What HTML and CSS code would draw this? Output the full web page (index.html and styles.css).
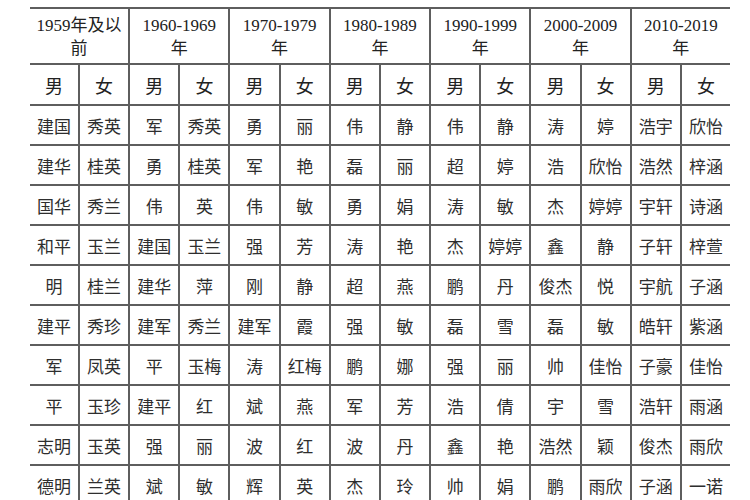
FILE: index.html
```html
<!DOCTYPE html>
<html lang="zh">
<head>
<meta charset="utf-8">
<title>各年代常见名字</title>
<link rel="stylesheet" href="styles.css">
</head>
<body>
<div class="sheet">
  <div class="cell head first">1959年及以<br>前</div>
  <div class="cell head">1960-1969<br>年</div>
  <div class="cell head">1970-1979<br>年</div>
  <div class="cell head">1980-1989<br>年</div>
  <div class="cell head">1990-1999<br>年</div>
  <div class="cell head">2000-2009<br>年</div>
  <div class="cell head">2010-2019<br>年</div>

  <div class="cell sex first">男</div><div class="cell sex">女</div>
  <div class="cell sex">男</div><div class="cell sex">女</div>
  <div class="cell sex">男</div><div class="cell sex">女</div>
  <div class="cell sex">男</div><div class="cell sex">女</div>
  <div class="cell sex">男</div><div class="cell sex">女</div>
  <div class="cell sex">男</div><div class="cell sex">女</div>
  <div class="cell sex">男</div><div class="cell sex">女</div>

  <div class="cell first">建国</div><div class="cell">秀英</div><div class="cell">军</div><div class="cell">秀英</div><div class="cell">勇</div><div class="cell">丽</div><div class="cell">伟</div><div class="cell">静</div><div class="cell">伟</div><div class="cell">静</div><div class="cell">涛</div><div class="cell">婷</div><div class="cell">浩宇</div><div class="cell">欣怡</div>

  <div class="cell first">建华</div><div class="cell">桂英</div><div class="cell">勇</div><div class="cell">桂英</div><div class="cell">军</div><div class="cell">艳</div><div class="cell">磊</div><div class="cell">丽</div><div class="cell">超</div><div class="cell">婷</div><div class="cell">浩</div><div class="cell">欣怡</div><div class="cell">浩然</div><div class="cell">梓涵</div>

  <div class="cell first">国华</div><div class="cell">秀兰</div><div class="cell">伟</div><div class="cell">英</div><div class="cell">伟</div><div class="cell">敏</div><div class="cell">勇</div><div class="cell">娟</div><div class="cell">涛</div><div class="cell">敏</div><div class="cell">杰</div><div class="cell">婷婷</div><div class="cell">宇轩</div><div class="cell">诗涵</div>

  <div class="cell first">和平</div><div class="cell">玉兰</div><div class="cell">建国</div><div class="cell">玉兰</div><div class="cell">强</div><div class="cell">芳</div><div class="cell">涛</div><div class="cell">艳</div><div class="cell">杰</div><div class="cell">婷婷</div><div class="cell">鑫</div><div class="cell">静</div><div class="cell">子轩</div><div class="cell">梓萱</div>

  <div class="cell first">明</div><div class="cell">桂兰</div><div class="cell">建华</div><div class="cell">萍</div><div class="cell">刚</div><div class="cell">静</div><div class="cell">超</div><div class="cell">燕</div><div class="cell">鹏</div><div class="cell">丹</div><div class="cell">俊杰</div><div class="cell">悦</div><div class="cell">宇航</div><div class="cell">子涵</div>

  <div class="cell first">建平</div><div class="cell">秀珍</div><div class="cell">建军</div><div class="cell">秀兰</div><div class="cell">建军</div><div class="cell">霞</div><div class="cell">强</div><div class="cell">敏</div><div class="cell">磊</div><div class="cell">雪</div><div class="cell">磊</div><div class="cell">敏</div><div class="cell">皓轩</div><div class="cell">紫涵</div>

  <div class="cell first">军</div><div class="cell">凤英</div><div class="cell">平</div><div class="cell">玉梅</div><div class="cell">涛</div><div class="cell">红梅</div><div class="cell">鹏</div><div class="cell">娜</div><div class="cell">强</div><div class="cell">丽</div><div class="cell">帅</div><div class="cell">佳怡</div><div class="cell">子豪</div><div class="cell">佳怡</div>

  <div class="cell first">平</div><div class="cell">玉珍</div><div class="cell">建平</div><div class="cell">红</div><div class="cell">斌</div><div class="cell">燕</div><div class="cell">军</div><div class="cell">芳</div><div class="cell">浩</div><div class="cell">倩</div><div class="cell">宇</div><div class="cell">雪</div><div class="cell">浩轩</div><div class="cell">雨涵</div>

  <div class="cell first">志明</div><div class="cell">玉英</div><div class="cell">强</div><div class="cell">丽</div><div class="cell">波</div><div class="cell">红</div><div class="cell">波</div><div class="cell">丹</div><div class="cell">鑫</div><div class="cell">艳</div><div class="cell">浩然</div><div class="cell">颖</div><div class="cell">俊杰</div><div class="cell">雨欣</div>

  <div class="cell first">德明</div><div class="cell">兰英</div><div class="cell">斌</div><div class="cell">敏</div><div class="cell">辉</div><div class="cell">英</div><div class="cell">杰</div><div class="cell">玲</div><div class="cell">帅</div><div class="cell">娟</div><div class="cell">鹏</div><div class="cell">雨欣</div><div class="cell">子涵</div><div class="cell">一诺</div>
</div>
</body>
</html>
```

FILE: styles.css
```css
html, body {
  margin: 0;
  padding: 0;
  background: #ffffff;
}

body {
  width: 750px;
  height: 500px;
  overflow: hidden;
}

.sheet {
  display: grid;
  width: 700px;
  margin: 7px 0 0 30px;
  grid-template-columns: 48px repeat(13, 1fr);
  grid-template-rows: 56px 41px repeat(10, 40px);
  font-family: "Noto Sans CJK SC", "Noto Sans", sans-serif;
  font-size: 17px;
  color: #2e2e2e;
}

.cell {
  display: flex;
  align-items: center;
  justify-content: center;
  text-align: center;
  border-top: 2px solid #5e5e5e;
  border-left: 2px solid #5e5e5e;
  white-space: nowrap;
}

.cell.first {
  border-left: none;
}

.head {
  grid-column: span 2;
  font-family: "Liberation Serif", "Noto Sans CJK SC", serif;
  font-size: 17px;
  line-height: 23px;
  color: #222;
  padding-top: 1px;
}

.sex {
  font-size: 18px;
  color: #222;
}
```
